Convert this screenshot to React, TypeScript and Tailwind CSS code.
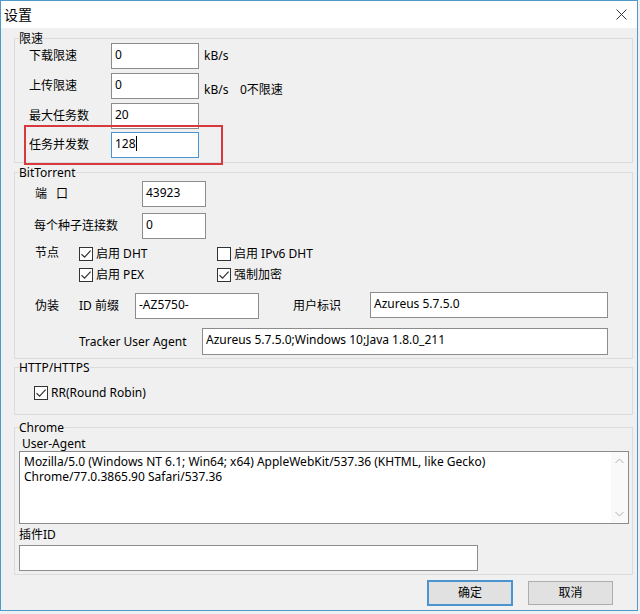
import React from "react";

const font = "font-['Noto_Sans','Noto_Sans_CJK_SC',sans-serif]";

const Box = ({ value, className = "" }: { value?: React.ReactNode; className?: string }) => (
  <div className={`h-[26px] shrink-0 overflow-hidden border border-[#8c8c8c] bg-white px-[3px] pt-[2px] leading-[17px] ${className}`}>
    {value}
  </div>
);

const Check = ({ checked, label, className = "" }: { checked: boolean; label: string; className?: string }) => (
  <div className={`flex h-[20px] items-center ${className}`}>
    <span className="flex h-[14px] w-[14px] shrink-0 items-center justify-center border border-[#333] bg-white">
      {checked && (
        <svg width="12" height="12" viewBox="0 0 12 12">
          <path d="M1.5 6.2 L4.6 9.2 L10.6 2.6" fill="none" stroke="#333" strokeWidth="1.2" />
        </svg>
      )}
    </span>
    <span className="ml-[3px]">{label}</span>
  </div>
);

const Group = ({
  title,
  className = "",
  children,
}: {
  title: string;
  className?: string;
  children: React.ReactNode;
}) => (
  <div className={`relative ml-[13px] w-[619px] shrink-0 border border-[#dcdcdc] ${className}`}>
    <div className="-mt-[8px] ml-[4px] h-[15px] w-fit bg-[#f0f0f0] leading-[15px]">{title}</div>
    {children}
  </div>
);

export default function App() {
  return (
    <div className={`h-[614px] w-[640px] bg-[#eef1f3] text-[12px] text-black ${font}`}>
      <div className="flex h-[611px] w-[638px] flex-col border border-[#4f9ac8] bg-[#f0f0f0]">
        {/* title bar */}
        <div className="flex h-[27px] shrink-0 items-center justify-between bg-white pl-[3px] pr-[10px]">
          <span className="text-[14px] leading-[20px]">设置</span>
          <svg width="11" height="11" viewBox="0 0 11 11">
            <path d="M0.5 0.5 L10.5 10.5 M10.5 0.5 L0.5 10.5" stroke="#333" strokeWidth="1" />
          </svg>
        </div>

        {/* 限速 */}
        <Group title="限速" className="mt-[10px] pb-[4px]">
          <div className="-mt-[3px] flex flex-col pl-[14px]">
            <div className="flex h-[26px] items-center">
              <span className="w-[82px]">下载限速</span>
              <Box value="0" className="w-[88px]" />
              <span className="ml-[5px]">kB/s</span>
            </div>
            <div className="mt-[4px] flex h-[26px] items-center">
              <span className="w-[82px]">上传限速</span>
              <Box value="0" className="w-[88px]" />
              <span className="ml-[5px] w-[36px] pt-[8px]">kB/s</span>
              <span className="pt-[8px]">0不限速</span>
            </div>
            <div className="mt-[4px] flex h-[26px] items-center">
              <span className="w-[82px]">最大任务数</span>
              <Box value="20" className="w-[88px]" />
            </div>
            <div className="mt-[3px] flex h-[26px] items-center">
              <span className="w-[82px]">任务并发数</span>
              <div className="flex h-[26px] w-[88px] border border-[#4a94d2] bg-white px-[3px] pt-[2px] leading-[17px]">
                <span>128</span>
                <span className="mt-[1px] h-[15px] w-px bg-black" />
              </div>
            </div>
          </div>
          <div className="absolute left-[9px] top-[86px] h-[40px] w-[199px] border-2 border-[#d8393f]" />
        </Group>

        {/* BitTorrent */}
        <Group title="BitTorrent" className="mt-[9px] pb-[3px]">
          <div className="mt-px flex flex-col pl-[20px]">
            <div className="flex h-[26px] items-center">
              <span className="w-[107px]">
                端<span className="ml-[9px]">口</span>
              </span>
              <Box value="43923" className="w-[64px]" />
            </div>
            <div className="mt-[6px] flex h-[26px] items-center">
              <span className="-ml-px w-[108px]">每个种子连接数</span>
              <Box value="0" className="w-[64px]" />
            </div>
            <div className="mt-[5px] flex">
              <span className="h-[20px] w-[44px] leading-[18px]">节点</span>
              <div className="grid grid-cols-[138px_auto]">
                <Check checked label="启用 DHT" />
                <Check checked={false} label="启用 IPv6 DHT" />
                <Check checked label="启用 PEX" className="mt-px" />
                <Check checked label="强制加密" className="mt-px" />
              </div>
            </div>
            <div className="mt-[8px] flex h-[26px] items-center">
              <span className="w-[44px]">伪装</span>
              <span className="w-[56px]">ID 前缀</span>
              <Box value="-AZ5750-" className="w-[124px]" />
              <span className="ml-[34px] w-[77px]">用户标识</span>
              <Box value="Azureus 5.7.5.0" className="-mt-[2px] w-[238px]" />
            </div>
            <div className="mt-[9px] flex h-[27px] items-center pl-[44px]">
              <span className="w-[123px]">Tracker User Agent</span>
              <Box value="Azureus 5.7.5.0;Windows 10;Java 1.8.0_211" className="h-[27px] w-[406px]" />
            </div>
          </div>
        </Group>

        {/* HTTP/HTTPS */}
        <Group title="HTTP/HTTPS" className="mt-[8px] pb-[11px]">
          <Check checked label="RR(Round Robin)" className="ml-[19px] mt-[8px]" />
        </Group>

        {/* Chrome */}
        <Group title="Chrome" className="mt-[12px] pb-[3px]">
          <div className="ml-[7px] mt-px h-[15px] leading-[15px]">User-Agent</div>
          <div className="ml-[4px] flex h-[73px] w-[610px] border border-[#8c8c8c] bg-white">
            <div className="flex-1 pl-[4px] pt-[2px] leading-[15px]">
              Mozilla/5.0 (Windows NT 6.1; Win64; x64) AppleWebKit/537.36 (KHTML, like Gecko)
              <br />
              Chrome/77.0.3865.90 Safari/537.36
            </div>
            <div className="flex w-[17px] flex-col items-center justify-between bg-[#f9f9f9] py-[6px]">
              <svg width="9" height="6" viewBox="0 0 9 6">
                <path d="M0.5 5 L4.5 1 L8.5 5" fill="none" stroke="#b0b0b0" strokeWidth="1" />
              </svg>
              <svg width="9" height="6" viewBox="0 0 9 6">
                <path d="M0.5 1 L4.5 5 L8.5 1" fill="none" stroke="#b0b0b0" strokeWidth="1" />
              </svg>
            </div>
          </div>
          <div className="ml-[4px] mt-[3px] h-[15px] leading-[15px]">插件ID</div>
          <Box className="ml-[4px] mt-[3px] h-[25px] w-[459px]" />
        </Group>

        {/* dialog buttons */}
        <div className="mr-[24px] mt-[5px] flex items-start justify-end gap-[15px]">
          <button className="h-[26px] w-[86px] border-2 border-[#4a94d2] bg-[#e1e1e1]">确定</button>
          <button className="mt-px h-[24px] w-[85px] border border-[#adadad] bg-[#e1e1e1]">取消</button>
        </div>
      </div>
    </div>
  );
}
